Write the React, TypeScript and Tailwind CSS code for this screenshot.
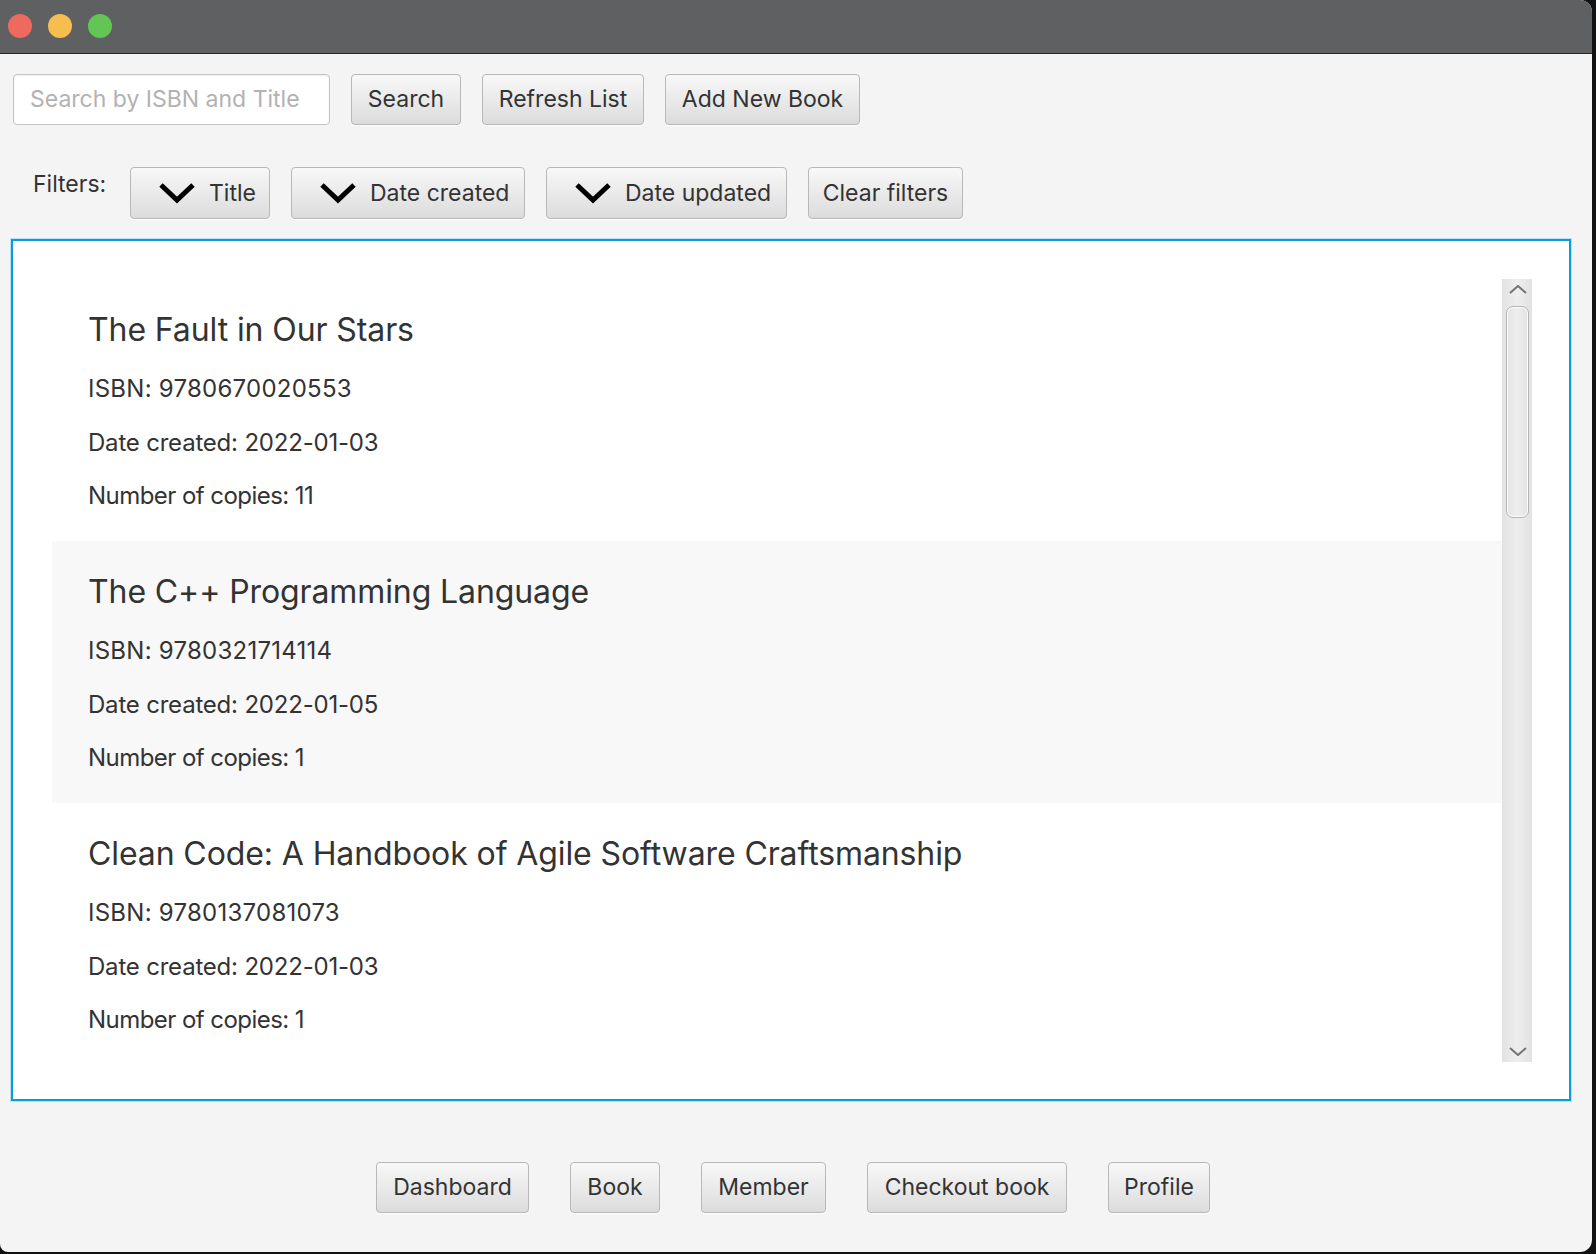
import React from "react";

function Btn({ w, h = 51, children, className = "" }: { w: string; h?: number; children: React.ReactNode; className?: string }) {
  return (
    <div
      className={`${w} ${h === 52 ? "h-[52px]" : "h-[51px]"} shrink-0 rounded-[4px] border-[1.5px] border-[#b8b8b8] bg-linear-to-b from-[#f8f8f8] to-[#dcdcdc] text-[#333333] text-[23px] flex items-center shadow-[0_1px_0_rgba(255,255,255,0.9)] ${className}`}
    >
      {children}
    </div>
  );
}

function Chevron() {
  return (
    <svg width="36" height="22" viewBox="0 0 36 22" className="shrink-0">
      <polyline points="2,3 18,18 34,3" fill="none" stroke="#000" strokeWidth="5" strokeLinejoin="miter" />
    </svg>
  );
}

function FilterBtn({ w, label }: { w: string; label: string }) {
  return (
    <Btn w={w} h={52} className="pl-[28px] gap-[14px]">
      <Chevron />
      <span>{label}</span>
    </Btn>
  );
}

const books = [
  { title: "The Fault in Our Stars", isbn: "9780670020553", date: "2022-01-03", copies: "11" },
  { title: "The C++ Programming Language", isbn: "9780321714114", date: "2022-01-05", copies: "1" },
  { title: "Clean Code: A Handbook of Agile Software Craftsmanship", isbn: "9780137081073", date: "2022-01-03", copies: "1" },
];

export default function App() {
  return (
    <div className="w-[1596px] h-[1254px] bg-[#121212] font-['Inter','Noto_Sans',sans-serif] overflow-hidden">
      <div className="w-[1592px] h-[1252px] bg-[#f4f4f4] rounded-tr-[12px] rounded-br-[12px] rounded-bl-[8px] overflow-hidden flex flex-col">
        {/* Title bar */}
        <div className="h-[54px] shrink-0 bg-[#5f6061] border-b border-[#262626] flex items-start pt-[14px] pl-[8px] gap-[16px]">
          <div className="w-[24px] h-[24px] rounded-full bg-[#ee6a5f]" />
          <div className="w-[24px] h-[24px] rounded-full bg-[#f5be4f]" />
          <div className="w-[24px] h-[24px] rounded-full bg-[#62c554]" />
        </div>

        {/* Top row */}
        <div className="mt-[20px] pl-[13px] flex items-center gap-[21px]">
          <div className="w-[317px] h-[51px] shrink-0 rounded-[4px] border-[1.5px] border-[#c4c4c4] bg-white shadow-[inset_0_1px_2px_rgba(0,0,0,0.08)] flex items-center pl-[16px] text-[23px] text-[#b2b2b2]">
            Search by ISBN and Title
          </div>
          <Btn w="w-[110px]" className="justify-center">Search</Btn>
          <Btn w="w-[162px]" className="justify-center">Refresh List</Btn>
          <Btn w="w-[195px]" className="justify-center">Add New Book</Btn>
        </div>

        {/* Filters row */}
        <div className="mt-[42px] flex items-start">
          <div className="w-[130px] shrink-0 pl-[33px] pt-[3px] text-[23px] leading-[28px] text-[#333333]">Filters:</div>
          <div className="flex items-center gap-[21px]">
            <FilterBtn w="w-[140px]" label="Title" />
            <FilterBtn w="w-[234px]" label="Date created" />
            <FilterBtn w="w-[241px]" label="Date updated" />
            <Btn w="w-[155px]" h={52} className="justify-center">Clear filters</Btn>
          </div>
        </div>

        {/* List panel */}
        <div className="mt-[20px] ml-[11px] w-[1560px] h-[862px] shrink-0 bg-white border-2 border-[#0b9dd8] shadow-[0_0_0_1px_#b9e1f3] pl-[39px] pt-[38px]">
          <div className="w-[1480px] h-[783px] flex overflow-hidden">
            <div className="flex-1 flex flex-col overflow-hidden">
              {books.map((b, i) => (
                <div
                  key={i}
                  className={`h-[262px] shrink-0 pl-[36px] pt-[31px] text-[#333333] ${i % 2 === 1 ? "bg-[#f8f8f8]" : "bg-white"}`}
                >
                  <div className="text-[32px] leading-[40px] h-[40px] whitespace-nowrap tracking-[-0.1px]">{b.title}</div>
                  <div className="mt-[23px] text-[24px] leading-[32px] h-[32px] whitespace-nowrap tracking-[0.25px]">ISBN: {b.isbn}</div>
                  <div className="mt-[22px] text-[24px] leading-[32px] h-[32px] whitespace-nowrap tracking-[-0.2px]">Date created: {b.date}</div>
                  <div className="mt-[21px] text-[24px] leading-[32px] h-[32px] whitespace-nowrap tracking-[-0.55px]">Number of copies: {b.copies}</div>
                </div>
              ))}
            </div>
            {/* Scrollbar */}
            <div className="w-[30px] shrink-0 h-full bg-linear-to-r from-[#e2e2e2] via-[#eeeeee] to-[#e2e2e2] flex flex-col items-center">
              <svg width="18" height="9" viewBox="0 0 18 9" className="mt-[6px] ml-[1px]">
                <polyline points="1,8 9,1 17,8" fill="none" stroke="#747474" strokeWidth="2" />
              </svg>
              <div className="mt-[12px] ml-[1px] w-[23px] h-[212px] rounded-[7px] border border-[#b4b4b4] bg-linear-to-r from-[#e4e4e4] via-[#eeeeee] to-[#e2e2e2] shadow-[inset_0_0_0_1px_rgba(255,255,255,0.9)]" />
              <div className="flex-1" />
              <svg width="18" height="9" viewBox="0 0 18 9" className="mb-[6px] ml-[1px]">
                <polyline points="1,1 9,8 17,1" fill="none" stroke="#747474" strokeWidth="2" />
              </svg>
            </div>
          </div>
        </div>

        {/* Bottom nav */}
        <div className="mt-[61px] pl-[376px] flex items-center gap-[41px]">
          <Btn w="w-[153px]" className="justify-center">Dashboard</Btn>
          <Btn w="w-[90px]" className="justify-center">Book</Btn>
          <Btn w="w-[125px]" className="justify-center">Member</Btn>
          <Btn w="w-[200px]" className="justify-center">Checkout book</Btn>
          <Btn w="w-[102px]" className="justify-center">Profile</Btn>
        </div>
      </div>
    </div>
  );
}
